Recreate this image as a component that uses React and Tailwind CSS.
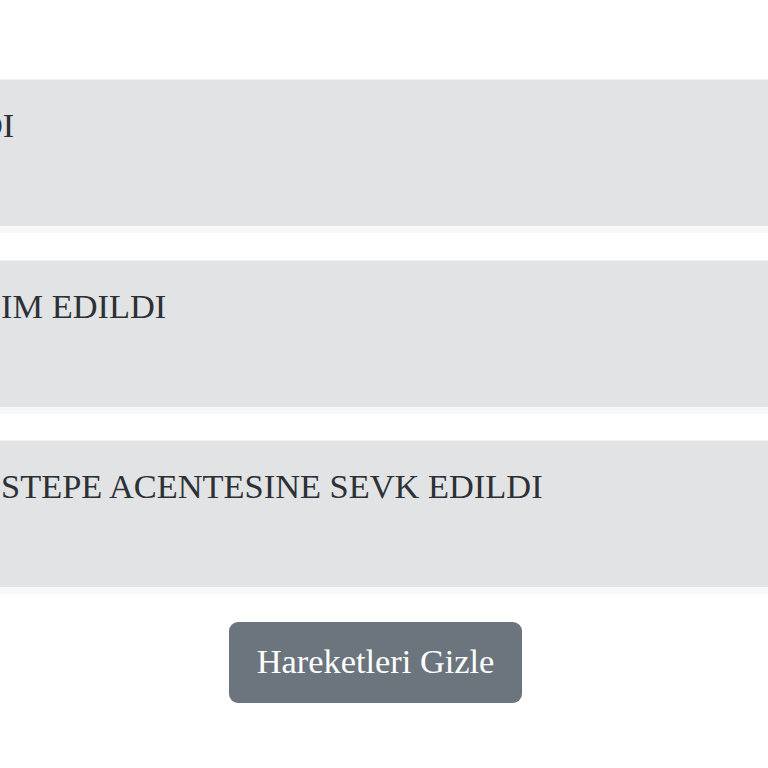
import React from "react";

const rows = [
  { text: "DI", offset: "-ml-[22px]" },
  { text: "IM EDILDI", offset: "ml-[1px]" },
  { text: "STEPE ACENTESINE SEVK EDILDI", offset: "ml-[1px]" },
];

export default function App() {
  return (
    <div
      className="min-h-screen bg-white pt-[80px] overflow-hidden"
      style={{ fontFamily: '"Liberation Serif", "Times New Roman", serif' }}
    >
      {/* Movement rows */}
      {rows.map((row, i) => (
        <div
          key={i}
          className="h-[146px] mb-[34.5px] bg-[#e2e3e5] pt-[20px] shadow-[0_7px_0_#f7f8f9,0_-1px_0_#eef0f1] whitespace-nowrap"
        >
          <div className={`${row.offset} text-[34.4px] leading-[1.5] text-[#2d3135]`}>
            {row.text}
          </div>
        </div>
      ))}

      {/* Toggle button */}
      <div className="flex justify-center pr-[17px]">
        <button className="h-[81px] w-[293px] rounded-[9px] bg-[#6c757d] text-[34.4px] leading-[1.5] text-white">
          Hareketleri Gizle
        </button>
      </div>
    </div>
  );
}
